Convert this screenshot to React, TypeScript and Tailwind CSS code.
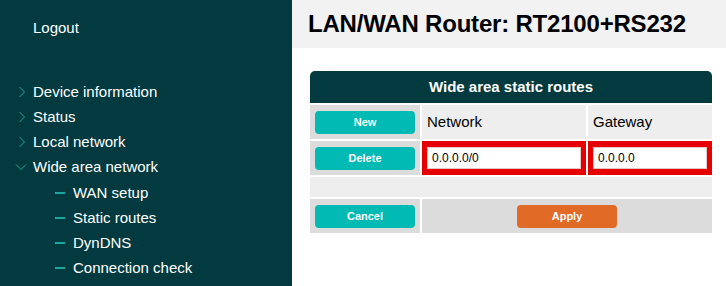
import React from "react";

const font = { fontFamily: '"Liberation Sans", Arial, Helvetica, sans-serif' };

function ChevronRight() {
  return (
    <svg width="8" height="12" viewBox="0 0 8 12" className="shrink-0">
      <polyline points="1.5,1 6.5,6 1.5,11" fill="none" stroke="#1aa89e" strokeWidth="1" />
    </svg>
  );
}

function ChevronDown() {
  return (
    <svg width="12" height="8" viewBox="0 0 12 8" className="shrink-0">
      <polyline points="1,1.5 6,6.5 11,1.5" fill="none" stroke="#1aa89e" strokeWidth="1" />
    </svg>
  );
}

const topItems = ["Device information", "Status", "Local network"];
const subItems = ["WAN setup", "Static routes", "DynDNS", "Connection check"];

function Btn({ label, color }: { label: string; color: string }) {
  return (
    <button
      className={`w-[100px] h-[23px] rounded-[4px] text-white font-bold text-[11px] ${color}`}
    >
      {label}
    </button>
  );
}

export default function App() {
  return (
    <div className="flex w-[726px] h-[286px] bg-white overflow-hidden" style={font}>
      <aside className="w-[292px] shrink-0 bg-[#023a40] text-white text-[15px]">
        <div className="pl-[33px] pt-[15px] h-[25px] leading-[25px] box-content">Logout</div>
        <div className="mt-[39px] flex flex-col">
          {topItems.map((t) => (
            <div key={t} className="flex items-center h-[25px] leading-[25px]">
              <div className="w-[33px] flex justify-start pl-[18px]">
                <ChevronRight />
              </div>
              <span>{t}</span>
            </div>
          ))}
          <div className="flex items-center h-[25px] leading-[25px]">
            <div className="w-[33px] flex justify-start pl-[15px] pt-[1px]">
              <ChevronDown />
            </div>
            <span>Wide area network</span>
          </div>
          <div className="flex flex-col mt-[1px]">
            {subItems.map((t) => (
              <div key={t} className="flex items-center h-[25px] leading-[25px]">
                <div className="w-[73px] flex justify-start pl-[55px]">
                  <div className="w-[10px] h-[2px] bg-[#1aa89e]" />
                </div>
                <span>{t}</span>
              </div>
            ))}
          </div>
        </div>
      </aside>
      <main className="flex-1 flex flex-col">
        <header className="h-[48px] bg-[#f2f2f3] flex items-center pl-[16px]">
          <h1 className="text-[24px] tracking-[-0.2px] font-bold text-black leading-none">LAN/WAN Router: RT2100+RS232</h1>
        </header>
        <div className="pl-[18px] pt-[23px]">
          <div className="w-[402px] flex flex-col gap-[2px]">
            <div className="h-[32px] bg-[#023a40] rounded-t-[5px] flex items-center justify-center text-white font-bold text-[15px]">
              Wide area static routes
            </div>
            <div className="grid grid-cols-[110px_164px_124px] gap-[2px] h-[34px]">
              <div className="bg-[#dcdcdc] flex items-center justify-center">
                <Btn label="New" color="bg-[#00bab3]" />
              </div>
              <div className="bg-[#eeeeee] flex items-center pl-[5px] text-[15px] text-black">Network</div>
              <div className="bg-[#eeeeee] flex items-center pl-[5px] text-[15px] text-black">Gateway</div>
            </div>
            <div className="grid grid-cols-[110px_164px_124px] gap-[2px] h-[34px]">
              <div className="bg-[#dcdcdc] flex items-center justify-center">
                <Btn label="Delete" color="bg-[#00bab3]" />
              </div>
              <div className="bg-[#e60000] flex items-center px-[5px]">
                <input
                  readOnly
                  value="0.0.0.0/0"
                  className="w-full h-[22px] bg-white border border-[#e6c8c8] px-[4px] text-[12px] text-black outline-none"
                  style={font}
                />
              </div>
              <div className="bg-[#e60000] flex items-center px-[5px]">
                <input
                  readOnly
                  value="0.0.0.0"
                  className="w-full h-[22px] bg-white border border-[#e6c8c8] px-[4px] text-[12px] text-black outline-none"
                  style={font}
                />
              </div>
            </div>
            <div className="h-[20px] bg-[#eeeeee]" />
            <div className="grid grid-cols-[110px_290px] gap-[2px] h-[34px]">
              <div className="bg-[#dcdcdc] flex items-center justify-center">
                <Btn label="Cancel" color="bg-[#00bab3]" />
              </div>
              <div className="bg-[#dcdcdc] flex items-center justify-center">
                <Btn label="Apply" color="bg-[#e06a26]" />
              </div>
            </div>
          </div>
        </div>
      </main>
    </div>
  );
}
